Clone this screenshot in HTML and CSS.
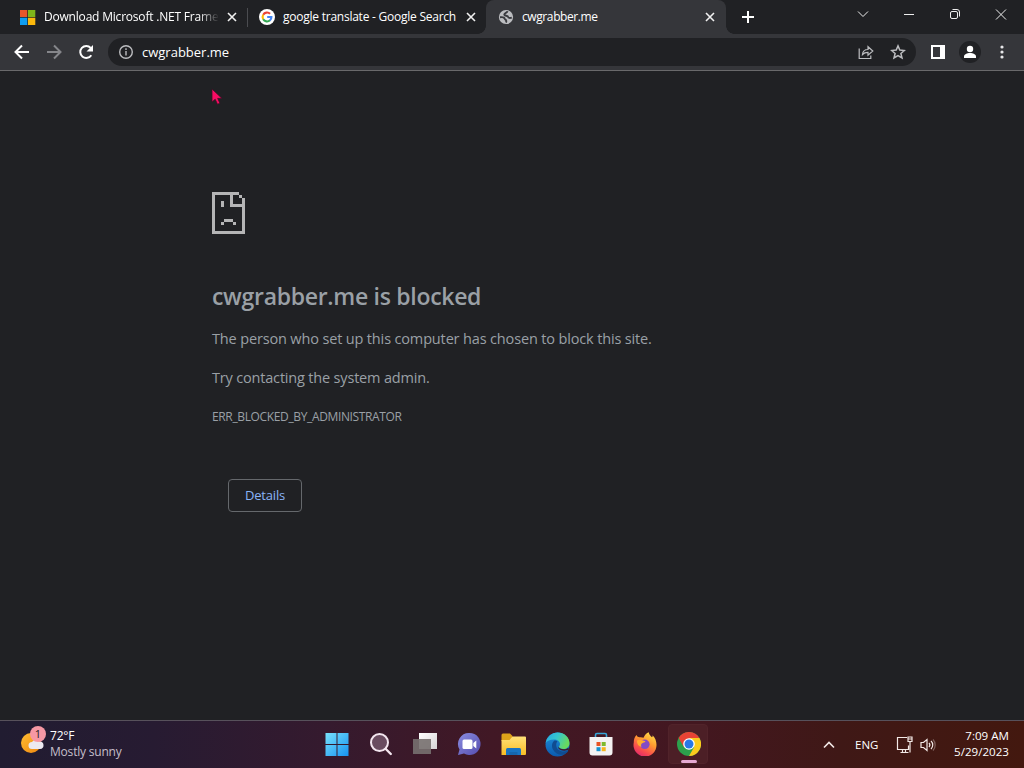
FILE: index.html
```html
<!DOCTYPE html>
<html lang="en">
<head>
<meta charset="UTF-8">
<meta name="viewport" content="width=device-width, initial-scale=1.0">
<title>cwgrabber.me</title>
<link rel="stylesheet" href="styles.css">
</head>
<body>

<!-- Tab strip -->
<div class="tabs">
    <div class="tab tab-first">
        <svg class="favicon" width="16" height="16" viewBox="0 0 16 16">
            <path fill="#e8572b" d="M0 1h7.3v7H0z"/><path fill="#7fb51a" d="M8 1h7.3v7H8z"/>
            <path fill="#0f9df0" d="M0 8.7h7.3V16H0z"/><path fill="#fbb80c" d="M8 8.7h7.3V16H8z"/>
        </svg>
        <span class="tab-title title-ms">Download Microsoft .NET Framework</span>
        <svg class="close" width="10" height="10" viewBox="0 0 10 10"><path d="M1 1l8 8M9 1L1 9"/></svg>
    </div>
    <div class="tab tab-second">
        <svg class="favicon" width="16" height="16" viewBox="0 0 16 16">
            <circle cx="8" cy="8" r="8" fill="#fff"/>
            <g fill="none" stroke-width="2.1">
                <path stroke="#ea4335" d="M4.2 5.8A4.4 4.4 0 0 1 11.1 4.8"/>
                <path stroke="#fbbc05" d="M4.2 10.2A4.5 4.5 0 0 1 4.2 5.8"/>
                <path stroke="#34a853" d="M11 11.3A4.4 4.4 0 0 1 4.2 10.2"/>
                <path stroke="#4285f4" d="M8.2 8H12.4A4.4 4.4 0 0 1 10.9 11.4"/>
            </g>
        </svg>
        <span class="tab-title title-google">google translate - Google Search</span>
        <svg class="close" width="10" height="10" viewBox="0 0 10 10"><path d="M1 1l8 8M9 1L1 9"/></svg>
    </div>
    <div class="tab tab-active">
        <svg class="favicon" width="16" height="16" viewBox="0 0 16 16">
            <circle cx="8" cy="8" r="7.1" fill="#bcbdc0"/>
            <path fill="none" stroke="#3a3b3f" stroke-width="1.9" d="M9.500 2.200C9.300 4 6.200 3.800 6.300 5.600c.1 1.600 3.600.6 3.900 2.400.2 1 1.600 1.200 3.600.7M2 8.300c2.200-.3 4.300 0 4.600 1.400.2 1.100 1.700.9 1.700 2.200 0 .7-.1 1.200-.4 1.700"/>
        </svg>
        <span class="tab-title title-active">cwgrabber.me</span>
        <svg class="close" width="10" height="10" viewBox="0 0 10 10"><path d="M1 1l8 8M9 1L1 9"/></svg>
    </div>
    <svg class="new-tab" width="12" height="12" viewBox="0 0 12 12"><path d="M6 0v12M0 6h12"/></svg>
    <div class="window-buttons">
        <svg width="46" height="28" viewBox="0 0 46 28"><path d="M18 11.500l5 5 5-5"/></svg>
        <svg width="46" height="28" viewBox="0 0 46 28"><path d="M18 14.500h10"/></svg>
        <svg width="46" height="28" viewBox="0 0 46 28"><rect x="18.500" y="11.500" width="7" height="7" rx="1.500"/><path d="M20.500 9.500h4.500a2.500 2.500 0 0 1 2.500 2.500v4.500"/></svg>
        <svg width="46" height="28" viewBox="0 0 46 28"><path d="M18 9.500l10 10M28 9.500l-10 10"/></svg>
    </div>
</div>

<!-- Address bar -->
<div class="toolbar">
    <svg class="nav" width="32" height="32" viewBox="0 0 32 32"><path d="M23 16H9.500M16 9.500L9.500 16l6.500 6.500"/></svg>
    <svg class="nav nav-off" width="32" height="32" viewBox="0 0 32 32"><path d="M9 16h13.500M16 9.500l6.500 6.500-6.500 6.500"/></svg>
    <svg class="nav" width="32" height="32" viewBox="0 0 32 32"><path d="M21.300 19.200a6 6 0 1 1-.6-7.300"/><path class="solid" d="M23 9v6.500h-6.500z"/></svg>
    <div class="omnibox">
        <svg class="info" width="16" height="16" viewBox="0 0 16 16"><circle cx="8" cy="8" r="6.300"/><path d="M8 7v4.500M8 4.300v1.600"/></svg>
        <span class="url">cwgrabber.me</span>
        <svg class="share" width="16" height="16" viewBox="0 0 16 16"><path d="M1.200 4.500v10h11.600v-3"/><path d="M4.500 10.500c.3-3.500 2.500-5 5.500-5V2.700L14.800 7 10 11.200V8.400c-2.500 0-4.200.6-5.500 2.100z"/></svg>
        <svg class="star" width="16" height="16" viewBox="0 0 16 16"><path d="M8 1.900l1.800 4.200 4.600.4-3.500 3 1.100 4.500-4-2.400L4 14l1.100-4.500-3.500-3 4.600-.4z"/></svg>
    </div>
    <svg class="side-panel" width="14" height="14" viewBox="0 0 14 14"><path fill="#fff" fill-rule="evenodd" d="M0 0h14v14H0zM2 2v10h7V2z"/></svg>
    <svg class="avatar" width="22" height="22" viewBox="0 0 22 22"><circle cx="11" cy="11" r="11" fill="#202124"/><circle cx="11" cy="8" r="3.200" fill="#fff"/><path fill="#fff" d="M5 17v-1.500c0-2.200 3-3.500 6-3.500s6 1.300 6 3.500V17z"/></svg>
    <svg class="dots" width="4" height="14" viewBox="0 0 4 14"><circle cx="2" cy="2" r="1.600"/><circle cx="2" cy="7" r="1.600"/><circle cx="2" cy="12" r="1.600"/></svg>
</div>

<!-- Error page -->
<main class="page">
    <svg class="sad-page" width="33" height="42" viewBox="0 0 11 14" shape-rendering="crispEdges">
        <path d="M0 0h9v1H7v3h3V2h1v12H0zM1 1v12h9V5H6V1zM9 1h1v1H9zM3 3h1v2H3zM4 9h3v1H4zM3 10h1v1H3zM7 10h1v1H7z" fill-rule="evenodd"/>
    </svg>
    <h1>cwgrabber.me is blocked</h1>
    <p class="reason">The person who set up this computer has chosen to block this site.</p>
    <p class="hint">Try contacting the system admin.</p>
    <p class="error-code">ERR_BLOCKED_BY_ADMINISTRATOR</p>
    <button class="details">Details</button>
</main>

<!-- Taskbar -->
<footer class="taskbar">
    <div class="weather">
        <svg width="28" height="30" viewBox="0 0 28 30">
            <defs><linearGradient id="sun" x1="0" y1="0" x2="1" y2="1"><stop offset="0" stop-color="#ffbd32"/><stop offset="1" stop-color="#ee8710"/></linearGradient></defs>
            <circle cx="11" cy="17" r="10" fill="url(#sun)"/>
            <path fill="#eceaf0" d="M12 23a3.500 3.500 0 0 1 0-7 4.500 4.500 0 0 1 7.500-.5A3.500 3.500 0 0 1 20 23z"/>
            <circle cx="18" cy="8" r="8" fill="#f698a4"/>
            <text x="18" y="12" class="badge">1</text>
        </svg>
        <div class="weather-text"><span class="temp">72°F</span><span class="sky">Mostly sunny</span></div>
    </div>
    <div class="apps">
        <div class="app"><svg width="24" height="24" viewBox="0 0 24 24">
            <defs><linearGradient id="win" gradientUnits="userSpaceOnUse" x1="0" y1="0" x2="24" y2="24"><stop offset="0" stop-color="#7be4fb"/><stop offset="1" stop-color="#1592f2"/></linearGradient></defs>
            <path fill="url(#win)" d="M.5 1h11v11H.5zM12.500 1h11v11h-11zM.5 13h11v11H.5zM12.500 13h11v11h-11z"/>
        </svg></div>
        <div class="app"><svg width="24" height="24" viewBox="0 0 24 24"><circle cx="10.500" cy="10.500" r="8.500" fill="#6a4c60" stroke="#f3e6ef" stroke-width="2"/><path d="M16.800 17l5 5" stroke="#f3e6ef" stroke-width="2.400" stroke-linecap="round"/></svg></div>
        <div class="app"><svg width="24" height="24" viewBox="0 0 24 24">
            <defs><linearGradient id="view" x1="0" y1="0" x2="1" y2="1"><stop offset="0" stop-color="#fff"/><stop offset="1" stop-color="#d5d2d4"/></linearGradient></defs>
            <path fill="url(#view)" d="M6 1h18v16H6z"/><path fill="#77706f" d="M0 7h18v15H0z" opacity=".9"/>
        </svg></div>
        <div class="app"><svg width="24" height="24" viewBox="0 0 24 24">
            <defs><linearGradient id="chat" x1="0" y1="0" x2="1" y2="1"><stop offset="0" stop-color="#8a8de0"/><stop offset="1" stop-color="#554cae"/></linearGradient></defs>
            <path fill="url(#chat)" d="M12.500 1a11 11 0 1 1-5.500 20.500L1 23l1.500-5.500A11 11 0 0 1 12.500 1z"/><rect x="5.500" y="7.500" width="10" height="9.500" rx="1.500" fill="#fff"/><path fill="#fff" d="M16.300 11l3-2.500v8l-3-2.500z"/>
        </svg></div>
        <div class="app"><svg width="25" height="24" viewBox="0 0 25 24">
            <defs><linearGradient id="folder" x1="0" y1="0" x2="0" y2="1"><stop offset="0" stop-color="#ffe179"/><stop offset="1" stop-color="#f9bd25"/></linearGradient></defs>
            <path fill="#dfa31a" d="M.5 3A1.500 1.500 0 0 1 2 1.500h7L11.500 4v5H.5z"/><path fill="url(#folder)" d="M.5 8h8l3-3.500H24a1 1 0 0 1 1 1V22a1 1 0 0 1-1 1H.5z"/><path fill="#1874c3" d="M5 23v-5.500a1.500 1.500 0 0 1 1.500-1.500h12a1.500 1.500 0 0 1 1.500 1.500V23z"/><path fill="#1666ae" d="M8.500 20h8v3h-8z"/>
        </svg></div>
        <div class="app"><svg width="25" height="25" viewBox="0 0 25 25">
            <defs><linearGradient id="edge-top" x1="0" y1="0" x2="1" y2=".4"><stop offset="0" stop-color="#27a7e5"/><stop offset=".5" stop-color="#35c5ce"/><stop offset="1" stop-color="#68d95e"/></linearGradient><linearGradient id="edge-low" x1="0" y1="0" x2="0" y2="1"><stop offset="0" stop-color="#2091dc"/><stop offset="1" stop-color="#0b5aae"/></linearGradient></defs>
            <circle cx="12.500" cy="12.500" r="12" fill="url(#edge-low)"/>
            <path fill="url(#edge-top)" d="M.7 11A12 12 0 0 1 12.500.500c7 0 12 5 12 10.500 0 4-3 6-6 6s-4.500-1-4.500-2 1-1.500 1-3c0-2.500-2.500-4.500-6-4.500-4 0-7 1.500-8.300 3.500z"/>
            <path fill="#104c91" d="M9.500 8.500c-2.500 2-3.300 5.500-1.500 9 2 4 6.500 6 10.500 5.200 2-.7 4-2.200 5-4.200-3 1.500-7 1.500-9.500-.3-3-2-3.700-6.200-1.500-9-1-.7-2-.9-3-.7z"/>
            <path fill="#3d182a" d="M14 15c0 1.300 2 2.200 4.500 2.200 2 0 3.500-.5 4.700-1.500l.8 1.800c-3 1.600-7.500 1.600-10-.5-1-1-.7-2 0-2z"/>
        </svg></div>
        <div class="app"><svg width="24" height="24" viewBox="0 0 24 24"><path d="M6.500 7V3A1.500 1.500 0 0 1 8 1.500h8A1.500 1.500 0 0 1 17.500 3v4" fill="none" stroke="#36a6d8" stroke-width="1.600"/><path fill="#f4f2f2" d="M.5 5h23v15.500a3 3 0 0 1-3 3h-17a3 3 0 0 1-3-3z"/><path fill="#e95424" d="M7.500 10h4v4h-4z"/><path fill="#7eb92c" d="M12.700 10h4v4h-4z"/><path fill="#1692cf" d="M7.500 15.200h4v4h-4z"/><path fill="#f5b51b" d="M12.700 15.200h4v4h-4z"/></svg></div>
        <div class="app"><svg width="24" height="24" viewBox="0 0 24 24">
            <defs><linearGradient id="fox" x1=".8" y1="0" x2=".25" y2="1"><stop offset="0" stop-color="#ffe34a"/><stop offset=".4" stop-color="#ff9a30"/><stop offset=".75" stop-color="#f84b4f"/><stop offset="1" stop-color="#de286e"/></linearGradient></defs>
            <path fill="url(#fox)" d="M3.500 3c.6 1.500 1.700 2.200 3 2.300 1.500-.2 3 0 4 .5C11.500 3 13.500 1 15.800.2c.1 2.400 1.700 3.500 3.200 5 .6-.6.700-1.200.5-2 2.700 2.400 4 6 4 9.500A11.500 11.500 0 1 1 .8 10.500C.7 8 1.500 5 3.500 3z"/>
            <circle cx="11.800" cy="12.300" r="4.800" fill="#834bc5"/><path fill="#ffab2e" d="M4 8.500c2-1 4.500-1 6-.1l2.500.8c-.8 1.600-2.500 1.300-3.700 2.300-.9.800-1 2-.3 3.300C5.500 14.500 3.800 11.500 4 8.500z"/>
        </svg></div>
        <div class="app app-open"><svg width="24" height="24" viewBox="0 0 24 24">
            <circle cx="12" cy="12" r="12" fill="#2ca14c"/>
            <path fill="#e74335" d="M1.600 6A12 12 0 0 1 22.400 6H12v6L6.800 15z"/><path fill="#fccb1d" d="M22.400 6A12 12 0 0 1 12 24l5.200-9L12 6z"/>
            <circle cx="12" cy="12" r="5.800" fill="#fff"/><circle cx="12" cy="12" r="4.500" fill="#2878e8"/>
        </svg></div>
    </div>
    <div class="tray">
        <svg class="chevron" width="12" height="8" viewBox="0 0 12 8"><path d="M1 6.500l5-5 5 5"/></svg>
        <span class="lang">ENG</span>
        <svg class="network" width="18" height="18" viewBox="0 0 18 18"><path d="M11 1.500H1.500v12h11v-4M4.500 16.500h8M6.500 13.500v3M9.500 13.500v3M12 1h4v4.500h-4zM14 5.500v11M12.500 3h3"/></svg>
        <svg class="sound" width="16" height="16" viewBox="0 0 16 16"><path d="M1 5.500h2.500L7 2.500v11L3.500 10.500H1zM9 6a3 3 0 0 1 0 4M11 4a5.500 5.500 0 0 1 0 8"/><path d="M13 2.500a8 8 0 0 1 0 11" opacity=".35"/></svg>
        <div class="clock"><span class="time">7:09 AM</span><span class="date">5/29/2023</span></div>
    </div>
</footer>

<svg class="cursor" width="13" height="18" viewBox="0 0 13 18"><path d="M1 1v13l3.200-2.700 2.300 5 2.400-1.100-2.200-4.800H11z"/></svg>

</body>
</html>
```
FILE: styles.css
```css
* {
    box-sizing: border-box;
}

body {
    margin: 0;
    width: 1024px;
    height: 768px;
    overflow: hidden;
    display: flex;
    flex-direction: column;
    background: #202124;
    color: #fff;
    font-family: "Open Sans", "Noto Sans", sans-serif;
    font-size: 12px;
}

svg {
    display: block;
    flex: none;
}

span {
    white-space: nowrap;
}

/* Tab strip */
.tabs {
    display: flex;
    height: 34px;
    flex: none;
}

.tab {
    display: flex;
    align-items: center;
    height: 34px;
}

.tab-first {
    width: 248px;
    padding-left: 20px;
    background: linear-gradient(#4b4c50, #4b4c50) 247px 8px / 1px 19px no-repeat;
}

.tab-second {
    width: 238px;
    padding-left: 11px;
}

.tab-active {
    position: relative;
    width: 240px;
    padding-left: 12px;
    background: #35363a;
    border-radius: 8px 8px 0 0;
}

/* Curved feet of the active tab */
.tab-active::before,
.tab-active::after {
    content: "";
    position: absolute;
    bottom: 0;
    width: 8px;
    height: 8px;
}

.tab-active::before {
    left: -8px;
    background: radial-gradient(circle at 0 0, transparent 7.5px, #35363a 8px);
}

.tab-active::after {
    right: -8px;
    background: radial-gradient(circle at 100% 0, transparent 7.5px, #35363a 8px);
}

.tab-title {
    margin-left: 8px;
    width: 175px;
    line-height: 20px;
}

.title-ms {
    overflow: hidden;
    letter-spacing: -0.2px;
    mask-image: linear-gradient(90deg, #000 155px, transparent 175px);
}

.title-google {
    letter-spacing: -0.24px;
}

.title-active {
    letter-spacing: -0.4px;
}

.close {
    fill: none;
    stroke: #f1f1f1;
    stroke-width: 1.6;
    margin-left: 8px;
}

.tab-active .close {
    margin: 0 11px 0 auto;
}

.new-tab {
    margin: 11px 0 0 16px;
    stroke: #fff;
    stroke-width: 2;
}

.window-buttons {
    display: flex;
    margin-left: auto;
    fill: none;
    stroke: #eee;
}

/* Address bar */
.toolbar {
    display: flex;
    align-items: center;
    height: 37px;
    flex: none;
    padding-left: 6px;
    background: #35363a;
    border-bottom: 1px solid #69696b;
}

.nav {
    fill: none;
    stroke: #fff;
    stroke-width: 2;
}

.nav .solid {
    fill: #fff;
    stroke: none;
}

.nav-off {
    stroke: #85868a;
}

.omnibox {
    display: flex;
    align-items: center;
    width: 808px;
    height: 28px;
    margin-left: 6px;
    padding: 0 10px;
    border-radius: 14px;
    background: #202124;
    fill: none;
    stroke: #bcbdc0;
    stroke-width: 1.4;
}

.url {
    margin-left: 8px;
    font-size: 13px;
}

.share {
    margin-left: auto;
    stroke-width: 1.2;
}

.star {
    margin-left: 16px;
    stroke-width: 1.5;
}

.side-panel {
    margin-left: 15px;
}

.avatar {
    margin-left: 14px;
}

.dots {
    margin-left: 19px;
    fill: #e8e8ea;
}

/* Error page */
.page {
    flex: 1;
    padding: 121px 0 0 212px;
    color: #9aa0a6;
}

.sad-page {
    fill: #b5b5b6;
}

h1 {
    margin: 46px 0 0;
    font-size: 23px;
    font-weight: 600;
    line-height: 32px;
    letter-spacing: -0.3px;
}

p {
    margin: 0;
    white-space: nowrap;
}

.reason,
.hint {
    font-size: 14.5px;
    line-height: 24px;
    letter-spacing: -0.15px;
}

.reason {
    margin-top: 15px;
}

.hint {
    margin-top: 15px;
    letter-spacing: -0.18px;
}

.error-code {
    margin-top: 17px;
    font-size: 12px;
    line-height: 20px;
    letter-spacing: -0.36px;
}

.details {
    display: block;
    width: 74px;
    height: 33px;
    margin: 52px 0 0 16px;
    padding: 0 0 1px;
    border: 1px solid #65686c;
    border-radius: 4px;
    background: #202124;
    color: #8ab4f8;
    font-family: "Open Sans", "Noto Sans", sans-serif;
    font-size: 13px;
    font-weight: 500;
    letter-spacing: -0.2px;
}

/* Taskbar */
.taskbar {
    display: grid;
    grid-template-columns: 315px 395px 1fr;
    height: 48px;
    flex: none;
    border-top: 1px solid #57515b;
    background: linear-gradient(90deg, #211c31 0, #271b32 15%, #351a2e 32%, #411825 48%, #431720 68%, #3f1816 82%, #43180f 100%);
}

.weather {
    display: flex;
    padding: 5px 0 0 20px;
}

.weather-text {
    display: flex;
    flex-direction: column;
    margin: 2px 0 0 2px;
    line-height: 16px;
    letter-spacing: -0.2px;
}

.sky {
    color: #c5bfca;
}

.badge {
    font-size: 11px;
    text-anchor: middle;
    fill: #222;
}

.apps {
    display: flex;
}

.app {
    position: relative;
    display: flex;
    align-items: center;
    justify-content: center;
    width: 44px;
    height: 46px;
    flex: none;
}

.app-open::before {
    content: "";
    position: absolute;
    inset: 3px 3px 3px 1px;
    border: 1px solid #51232a;
    border-radius: 4px;
    background: #4c1f26;
}

.app-open svg {
    position: relative;
}

.app-open::after {
    content: "";
    position: absolute;
    left: 14px;
    bottom: 4px;
    width: 16px;
    height: 3px;
    border-radius: 2px;
    background: #e7a9d2;
}

.tray {
    display: flex;
    align-items: center;
    padding-right: 15px;
    fill: none;
    stroke: #f3e9e7;
    stroke-width: 1.2;
}

.chevron {
    margin-left: 113px;
    stroke-width: 1.6;
}

.lang {
    margin-left: 20px;
    width: 24px;
    font-size: 11.5px;
}

.network {
    margin-left: 17px;
}

.sound {
    margin-left: 6px;
}

.clock {
    display: flex;
    flex-direction: column;
    align-items: flex-end;
    margin: 0 0 2px auto;
    line-height: 16px;
    font-size: 11.6px;
}

/* Mouse pointer */
.cursor {
    position: absolute;
    left: 211px;
    top: 88px;
    fill: #f80c63;
    stroke: #3c1225;
    stroke-width: 0.8;
}
```
